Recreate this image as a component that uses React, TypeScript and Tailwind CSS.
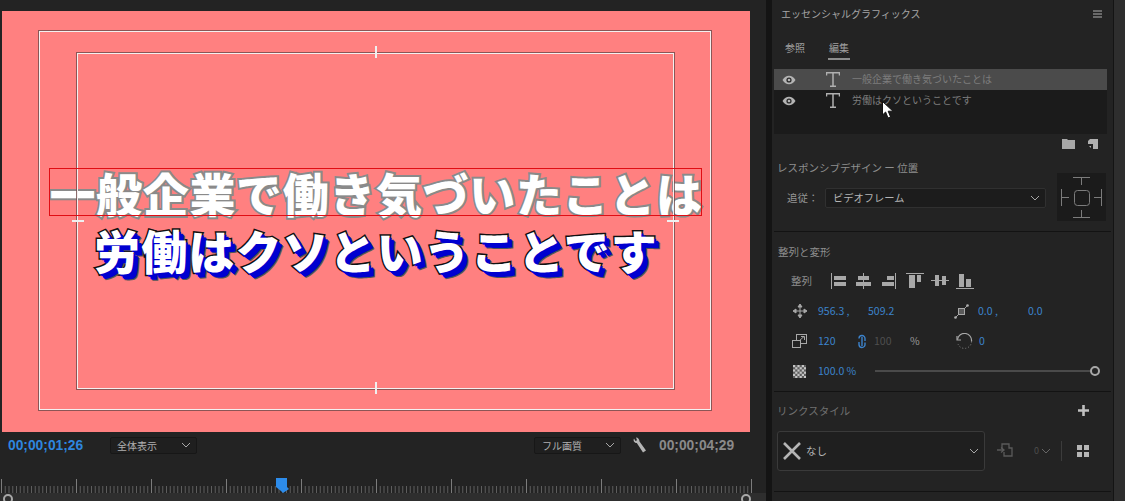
import { Fragment } from 'react';

const jp = 'font-["Noto_Sans_CJK_JP","Noto_Sans",sans-serif]';

const Chevron = ({ className = '' }: { className?: string }) => (
  <svg width="10" height="6" viewBox="0 0 10 6" className={className}>
    <path d="M1 1l4 4 4-4" fill="none" stroke="#a8a8a8" strokeWidth="1" />
  </svg>
);

const Eye = () => (
  <svg width="14" height="10" viewBox="0 0 14 10">
    <path d="M0.5 5C2.5 2 4.5 .8 7 .8S11.5 2 13.5 5C11.5 8 9.5 9.2 7 9.2S2.5 8 .5 5z" fill="#b4b4b4" />
    <circle cx="7" cy="5" r="2.6" fill="#2a2a2a" />
    <circle cx="7" cy="5" r="1.3" fill="#b4b4b4" />
  </svg>
);

const TIcon = () => (
  <svg width="14" height="15" viewBox="0 0 14 15">
    <path d="M0.5 3.5V0.8H13.5V3.5M7 .8V14M4 14.2H10" fill="none" stroke="#b0b0b0" strokeWidth="1.5" />
  </svg>
);

const LayerRow = ({ label, active }: { label: string; active?: boolean }) => (
  <div className={`flex h-[21px] items-center pl-[8px] ${active ? 'bg-[#4b4b4b]' : ''}`}>
    <Eye />
    <div className="ml-[30px] w-[26px]">
      <TIcon />
    </div>
    <span className="pb-[1px] text-[10px] leading-none text-[#7d7d7d]">{label}</span>
  </div>
);

// align icons: bars drawn as rects in an 18x16 box
const alignIcons = [
  ['M.5 0V16', 'M3 3H15V7H3z M3 9H15V13H3z'],
  ['M7.5 0V16', 'M2 3H13V7H2z M0 9H15V13H0z'],
  ['M14.5 0V16', 'M6 3H13V7H6z M1 9H13V13H1z'],
  ['M0 .5H18', 'M3 2H9V15H3z M11 2H15V9H11z'],
  ['M0 7.5H18', 'M4 2H8V13H4z M11 3H15V12H11z'],
  ['M0 15.5H18', 'M3 1H8V14H3z M10 6H15V14H10z'],
];

const Divider = () => <div className="mx-[2px] h-px bg-[#131313]" />;

const blueNum = 'text-[10.5px] leading-none text-[#3c83cc]';

function Canvas() {
  return (
    <div className={`relative h-[421px] w-[748px] bg-[#ff8080] ${jp}`}>
      {/* safe margins */}
      <div className="absolute left-[37px] top-[20px] h-[379px] w-[672px] border border-[#f4f0f0] outline outline-[#6f4a4a]/80" />
      <div className="absolute left-[75px] top-[42px] h-[336px] w-[597px] border border-[#f4f0f0] outline outline-[#6f4a4a]/80" />
      <div className="absolute left-[373px] top-[35px] h-[12px] w-[2px] bg-[#f0f0f0]" />
      <div className="absolute left-[373px] top-[371px] h-[12px] w-[2px] bg-[#f0f0f0]" />
      <div className="absolute left-[70px] top-[209px] h-[2px] w-[12px] bg-[#f0f0f0]" />
      <div className="absolute left-[665px] top-[209px] h-[2px] w-[12px] bg-[#f0f0f0]" />

      <div className="flex h-full flex-col items-center pt-[156px]">
        <div className="h-[50px] whitespace-nowrap text-[46px] font-black leading-[50px] tracking-[0.65px] text-white [-webkit-text-stroke:4px_#8a8a8a] [paint-order:stroke_fill]">
          一般企業で働き気づいたことは
        </div>
        <div className="mt-[7px] h-[50px] whitespace-nowrap text-[46px] font-black leading-[50px] tracking-[1.1px] text-white [-webkit-text-stroke:3px_#111] [paint-order:stroke_fill] [text-shadow:2px_2px_0_#0000d0,4px_4px_0_#0000d0,5px_5px_0_#0000d0,6px_6px_0_#555]">
          労働はクソということです
        </div>
      </div>

      {/* selection box */}
      <div className="absolute left-[47px] top-[157px] h-[48px] w-[653px] border border-[#e00d14]" />
    </div>
  );
}

function Ruler() {
  const ticks = [];
  for (let i = 0; i <= 200; i++) {
    const x = 1.5 + i * 3.75;
    const major = i % 20 === 0;
    ticks.push(<line key={i} x1={x} x2={x} y1={major ? 0 : 7} y2={14} stroke={major ? '#7c7c7c' : '#5e5e5e'} strokeWidth="1" />);
  }
  return (
    <svg width="766" height="14" viewBox="0 0 766 14">
      {ticks}
    </svg>
  );
}

function MonitorBar() {
  return (
    <>
      <div className={`flex h-[26px] items-center ${jp}`}>
        <span className='ml-[8px] w-[102px] origin-left font-["Liberation_Sans",sans-serif] text-[15px] font-bold text-[#2e86de] [transform:scaleX(0.92)]'>00;00;01;26</span>
        <div className="flex h-[17px] w-[87px] items-center justify-between rounded-[2px] border border-[#171717] bg-[#1f1f1f] pl-[6px] pr-[5px] text-[10px] text-[#b0b0b0]">
          全体表示
          <Chevron />
        </div>
        <div className="ml-[337px] flex h-[17px] w-[87px] items-center justify-between rounded-[2px] border border-[#171717] bg-[#1f1f1f] pl-[7px] pr-[5px] text-[10px] text-[#b0b0b0]">
          フル画質
          <Chevron />
        </div>
        <svg width="16" height="17" viewBox="0 0 16 17" className="ml-[11px]">
          <path d="M2 1.5C1 3.5 2 6 4.8 6L11 15.5 14 13.5 7.5 4.5C7.5 2.5 6 .5 4 .5L5 3.2 3.5 4z" fill="#b5b5b5" />
        </svg>
        <span className='ml-[11px] origin-left font-["Liberation_Sans",sans-serif] text-[15px] font-bold text-[#8a8a8a] [transform:scaleX(0.92)]'>00;00;04;29</span>
      </div>
      <div className="relative mt-[21px] h-[14px]">
        <Ruler />
        <svg width="13" height="15" viewBox="0 0 13 15" className="absolute left-[276px] top-[-1px]">
          <path d="M0 0H11V9L13 11 7 15 5 13 0 9z" fill="#2d8ceb" />
        </svg>
      </div>
      <div className="relative h-[9px] bg-[#2e2e2e]">
        <div className="absolute left-[3px] top-[1px] h-[10px] w-[10px] rounded-full border-2 border-[#a8a8a8]" />
        <div className="absolute left-[741px] top-[1px] h-[10px] w-[10px] rounded-full border-2 border-[#a8a8a8]" />
      </div>
    </>
  );
}

function RightPanel() {
  return (
    <div className={`relative w-[341px] bg-[#232323] ${jp}`}>
      {/* header */}
      <div className="flex h-[28px] items-center justify-between pl-[9px] pr-[11px]">
        <span className="text-[10px] leading-none text-[#a6a6a6]">エッセンシャルグラフィックス</span>
        <svg width="9" height="8" viewBox="0 0 9 8">
          <path d="M0 1H9M0 4H9M0 7H9" stroke="#b0b0b0" strokeWidth="1" />
        </svg>
      </div>
      {/* tabs */}
      <div className="ml-[13px] mt-[12px] flex h-[20px] gap-[24px] text-[10px] leading-[16px] text-[#a0a0a0]">
        <span>参照</span>
        <span className="-mx-[1px] h-[20px] border-b-2 border-[#8c8c8c] px-[1px]">編集</span>
      </div>
      {/* layers */}
      <div className="mx-[2px] mt-[9px] h-[65px] w-[333px] bg-[#1b1b1b]">
        <LayerRow label="一般企業で働き気づいたことは" active />
        <LayerRow label="労働はクソということです" />
      </div>
      <div className="flex h-[20px] items-center justify-end gap-[13px] pr-[15px]">
        <svg width="13" height="10" viewBox="0 0 13 10">
          <path d="M0 0H5L6 1H13V10H0z" fill="#a8a8a8" />
        </svg>
        <svg width="10" height="10" viewBox="0 0 10 10">
          <path d="M2 0H10V10H5V5H0V2z" fill="#b0b0b0" />
          <path d="M1 7H3V9z" fill="#b0b0b0" />
        </svg>
      </div>
      {/* responsive design */}
      <div className="flex h-[77px] pl-[5px] pt-[7px]">
        <div className="w-[280px]">
          <div className="text-[10.5px] leading-[14px] text-[#8e8e8e]">レスポンシブデザイン ー 位置</div>
          <div className="mt-[13px] flex items-center pl-[10px]">
            <span className="w-[38px] text-[10.5px] text-[#959595]">追従：</span>
            <div className="flex h-[20px] w-[221px] items-center justify-between rounded-[2px] border border-[#303030] bg-[#1c1c1c] pl-[7px] pr-[5px] text-[10.25px] text-[#b5b5b5]">
              ビデオフレーム
              <Chevron />
            </div>
          </div>
        </div>
        <div className="mt-[12px] h-[48px] w-[49px] bg-[#1b1b1b]">
          <svg width="49" height="48" viewBox="0 0 49 48">
            <g fill="none" stroke="#7c7c7c" strokeWidth="1">
              <rect x="17.5" y="17.5" width="15" height="15" rx="3" />
              <path d="M16 4.5H33M24.5 4.5V12M16 44.5H33M24.5 44.5V37M4.5 16V33M4.5 24.5H12M44.5 16V33M44.5 24.5H37" />
            </g>
          </svg>
        </div>
      </div>
      <Divider />
      {/* align and transform */}
      <div className="h-[159px] pl-[6px]">
        <div className="pt-[13px] text-[10.5px] leading-[14px] text-[#8e8e8e]">整列と変形</div>
        <div className="mt-[12px] flex h-[20px] items-center pl-[13px]">
          <span className="w-[40px] text-[10.5px] text-[#8e8e8e]">整列</span>
          <div className="flex gap-[7px]">
            {alignIcons.map(([line, bars], i) => (
              <svg key={i} width="18" height="16" viewBox="0 0 18 16">
                <path d={line} stroke="#a8a8a8" strokeWidth="1" />
                <path d={bars} fill="#a8a8a8" />
              </svg>
            ))}
          </div>
        </div>
        {/* position, anchor */}
        <div className="mt-[10px] flex h-[20px] items-center">
          <div className="flex w-[40px] justify-center pl-[3px]">
            <svg width="14" height="14" viewBox="0 0 14 14">
              <path d="M7 0L9 3H5zM7 14L5 11H9zM0 7L3 5V9zM14 7L11 9V5zM7 2V12M2 7H12" fill="#a8a8a8" stroke="#a8a8a8" strokeWidth="1" />
            </svg>
          </div>
          <span className={`${blueNum} w-[50px]`}>956.3 ,</span>
          <span className={`${blueNum} w-[86px]`}>509.2</span>
          <svg width="15" height="15" viewBox="0 0 15 15">
            <path d="M1.5 13.5L13.5 1.5" stroke="#a0a0a0" strokeWidth="1" />
            <rect x="4.5" y="4.5" width="6" height="6" fill="#5a5a5a" stroke="#a8a8a8" />
            <circle cx="1.5" cy="13.5" r="1.3" fill="#b0b0b0" />
            <circle cx="13.5" cy="1.5" r="1.3" fill="#b0b0b0" />
          </svg>
          <span className={`${blueNum} ml-[9px] w-[50px]`}>0.0 ,</span>
          <span className={blueNum}>0.0</span>
        </div>
        {/* scale, rotation */}
        <div className="mt-[10px] flex h-[20px] items-center">
          <div className="flex w-[40px] justify-center pl-[3px]">
            <svg width="15" height="14" viewBox="0 0 15 14">
              <rect x="4.5" y=".5" width="10" height="9" fill="none" stroke="#a8a8a8" />
              <rect x=".5" y="6.5" width="8" height="7" fill="#232323" stroke="#a8a8a8" />
              <path d="M7 7L12 2.5M9 2.5H12.5V6" fill="none" stroke="#a8a8a8" />
            </svg>
          </div>
          <span className={`${blueNum} w-[40px]`}>120</span>
          <svg width="8" height="15" viewBox="0 0 8 15">
            <path d="M1 4.5A3 3 0 0 1 7 4.5V7M7 8.5V10.5A3 3 0 0 1 1 10.5V8M4 3V12" fill="none" stroke="#3c83cc" strokeWidth="1.4" />
          </svg>
          <span className="ml-[8px] w-[36px] text-[10.5px] leading-none text-[#4f4f4f]">100</span>
          <span className="w-[46px] text-[10.5px] leading-none text-[#9a9a9a]">%</span>
          <svg width="17" height="17" viewBox="0 0 17 17">
            <path d="M1 3V7H5" fill="none" stroke="#a8a8a8" strokeWidth="1.2" />
            <path d="M1.5 6.5A7 7 0 0 1 15.5 8.5" fill="none" stroke="#a8a8a8" strokeWidth="1.2" />
            <path d="M15.5 8.5A7 7 0 0 1 2 11" fill="none" stroke="#8a8a8a" strokeWidth="1" strokeDasharray="1 2" />
          </svg>
          <span className={`${blueNum} ml-[6px]`}>0</span>
        </div>
        {/* opacity */}
        <div className="mt-[10px] flex h-[20px] items-center">
          <div className="flex w-[40px] justify-center pl-[3px]">
            <svg width="13" height="13" viewBox="0 0 13 13">
              <rect width="13" height="13" fill="#5c5c5c" />
              {[0, 1, 2, 3, 4, 5].map((r) => (
                <Fragment key={r}>
                  {[0, 1, 2, 3, 4, 5].map((c) =>
                    (r + c) % 2 === 0 ? <rect key={c} x={c * 2.2} y={r * 2.2} width="2.2" height="2.2" fill="#c4c4c4" /> : null,
                  )}
                </Fragment>
              ))}
            </svg>
          </div>
          <span className={`${blueNum} w-[57px]`}>100.0 %</span>
          <div className="h-[2px] w-[215px] bg-[#4a4a4a]" />
          <div className="h-[10px] w-[10px] rounded-full border-2 border-[#a8a8a8]" />
        </div>
      </div>
      <Divider />
      {/* link style */}
      <div className="h-[99px] pl-[5px]">
        <div className="mb-[2px] flex h-[37px] items-center justify-between pr-[24px]">
          <span className="text-[10.5px] text-[#707070]">リンクスタイル</span>
          <svg width="11" height="11" viewBox="0 0 11 11">
            <path d="M5.5 0V11M0 5.5H11" stroke="#c0c0c0" strokeWidth="2.6" />
          </svg>
        </div>
        <div className="flex items-center">
          <div className="flex h-[40px] w-[208px] items-center rounded-[3px] border border-[#3a3a3a] bg-[#1f1f1f] pl-[5px] pr-[5px]">
            <svg width="18" height="18" viewBox="0 0 18 18">
              <path d="M1 1L17 17M17 1L1 17" stroke="#b5b5b5" strokeWidth="2.6" />
            </svg>
            <span className="ml-[5px] flex-1 text-[10.5px] text-[#b5b5b5]">なし</span>
            <Chevron />
          </div>
          <svg width="16" height="16" viewBox="0 0 16 16" className="ml-[12px]">
            <path d="M5 6V1H12V5H15V13H7V9" fill="none" stroke="#5a5a5a" strokeWidth="1.3" />
            <path d="M0 7H6M4 4.5L7 7 4 9.5" fill="none" stroke="#5a5a5a" strokeWidth="1.3" />
          </svg>
          <span className="ml-[21px] text-[9px] text-[#4d4d4d]">0</span>
          <Chevron className="ml-[2px] opacity-50" />
          <div className="ml-[10px] h-[20px] w-px bg-[#3c3c3c]" />
          <svg width="12" height="12" viewBox="0 0 12 12" className="ml-[15px]">
            <path d="M0 0H5V5H0zM7 0H12V5H7zM0 7H5V12H0zM7 7H12V12H7z" fill="#b5b5b5" />
          </svg>
        </div>
      </div>
      <Divider />

      {/* mouse pointer over the layer list */}
      <svg width="12" height="18" viewBox="0 0 12 18" className="absolute left-[110px] top-[101px]">
        <path d="M.5 .5V14L3.6 11 6 17 8.6 16 6.2 10.2H11z" fill="#fff" stroke="#111" strokeWidth="1" />
      </svg>
    </div>
  );
}

export default function App() {
  return (
    <div className="flex h-[501px] w-[1125px] overflow-hidden bg-[#141414]">
      <div className="h-full w-[766px] bg-[#232323] pt-[11px]">
        <div className="pl-[2px]">
          <Canvas />
        </div>
        <MonitorBar />
      </div>
      <div className="ml-[6px] h-full bg-[#232323]">
        <RightPanel />
      </div>
      <div className="ml-[1px] h-full flex-1 bg-[#2e2e2e]" />
    </div>
  );
}
